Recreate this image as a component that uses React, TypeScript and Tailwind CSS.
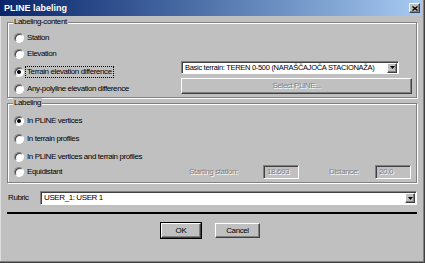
import React from "react";

const raised =
  "border border-t-white border-l-white border-r-[#404040] border-b-[#404040] shadow-[inset_-1px_-1px_0_#808080]";
const sunken =
  "border border-t-[#808080] border-l-[#808080] border-r-white border-b-white shadow-[inset_1px_1px_0_#404040]";
const etched =
  "border border-[#808080] shadow-[inset_1px_1px_0_white,1px_1px_0_white]";
const disabledText = "text-[#808080] [text-shadow:1px_1px_0_#ffffff]";

function Radio({ checked = false }: { checked?: boolean }) {
  return (
    <span className="w-[10px] h-[10px] shrink-0 rounded-full border border-t-[#808080] border-l-[#808080] border-r-white border-b-white bg-white shadow-[inset_1px_1px_0_#404040] flex items-center justify-center">
      {checked && <span className="w-[4px] h-[4px] rounded-full bg-black" />}
    </span>
  );
}

function RadioRow({
  label,
  checked,
  focus,
  className = "",
}: {
  label: string;
  checked?: boolean;
  focus?: boolean;
  className?: string;
}) {
  return (
    <div className={"flex items-center h-[12px] gap-[2px] " + className}>
      <Radio checked={checked} />
      <span
        className={
          "whitespace-nowrap leading-[10px] px-[1px] " +
          (focus ? "outline outline-1 outline-dotted outline-black" : "")
        }
      >
        {label}
      </span>
    </div>
  );
}

function Arrow() {
  return (
    <span className={"w-[10px] h-[10px] bg-[#c0c0c0] flex items-center justify-center " + raised}>
      <svg width="5" height="3" viewBox="0 0 5 3">
        <path d="M0 0H5L2.5 3Z" fill="#000" />
      </svg>
    </span>
  );
}

export default function App() {
  return (
    <div className="w-[425px] h-[263px] bg-[#c0c0c0] overflow-hidden flex flex-col font-['Liberation_Sans',Arial,sans-serif] text-[8px] tracking-[-0.4px] text-black shadow-[inset_-1px_-1px_0_#404040,inset_-2px_-2px_0_#808080,inset_1px_0_0_#dfdfdf]">
      {/* Title bar */}
      <div className="h-[16px] w-[421px] shrink-0 flex items-center justify-between pl-[4px] pr-[1px] bg-gradient-to-r from-[#0a246a] to-[#a6caf0]">
        <span className="text-white font-bold text-[9px] tracking-normal leading-none">PLINE labeling</span>
        <span className={"w-[11px] h-[10px] bg-[#c0c0c0] flex items-center justify-center " + raised}>
          <svg width="6" height="5" viewBox="0 0 6 5">
            <path d="M0.5 0.5L5.5 4.5M5.5 0.5L0.5 4.5" stroke="#000" strokeWidth="1.4" />
          </svg>
        </span>
      </div>

      <div className="flex flex-col pl-[7px]">
        {/* Group 1 */}
        <div className={"relative mt-[6px] w-[410px] h-[76px] flex " + etched}>
          <span className="absolute -top-[6px] left-[5px] px-[1px] bg-[#c0c0c0] leading-[10px]">
            Labeling-content
          </span>
          <div className="w-[173px] flex flex-col pl-[6px]">
            <RadioRow label="Station" className="mt-[9px]" />
            <RadioRow label="Elevation" className="mt-[4px]" />
            <RadioRow label="Terrain elevation difference" checked focus className="mt-[6px]" />
            <RadioRow label="Any-polyline elevation difference" className="mt-[5px]" />
          </div>
          <div className="flex flex-col pt-[38px]">
            <div className={"w-[218px] h-[13px] bg-white flex items-center justify-between pl-[3px] pr-[1px] " + sunken}>
              <span className="whitespace-nowrap leading-none text-[7.5px] tracking-[-0.3px]">
                Basic terrain: TEREN 0-500 (NARAŠČAJOČA STACIONAŽA)
              </span>
              <Arrow />
            </div>
            <div className={"mt-[4px] w-[231px] h-[16px] flex items-center justify-center " + raised}>
              <span className={disabledText}>Select PLINE...</span>
            </div>
          </div>
        </div>

        {/* Group 2 */}
        <div className={"relative mt-[5px] w-[410px] h-[80px] flex flex-col pl-[6px] " + etched}>
          <span className="absolute -top-[6px] left-[5px] px-[1px] bg-[#c0c0c0] leading-[10px]">Labeling</span>
          <RadioRow label="In PLINE vertices" checked className="mt-[11px]" />
          <RadioRow label="In terrain profiles" className="mt-[6px]" />
          <RadioRow label="In PLINE vertices and terrain profiles" className="mt-[6px]" />
          <div className="mt-[2px] h-[14px] flex items-center">
            <div className="w-[175px]">
              <RadioRow label="Equidistant" />
            </div>
            <span className={"w-[74px] whitespace-nowrap " + disabledText}>Starting station:</span>
            <div className={"w-[36px] h-[14px] flex items-center pl-[3px] " + sunken}>
              <span className={disabledText}>18.693</span>
            </div>
            <span className={"ml-[30px] w-[46px] whitespace-nowrap " + disabledText}>Distance:</span>
            <div className={"w-[36px] h-[14px] flex items-center pl-[3px] " + sunken}>
              <span className={disabledText}>20.0</span>
            </div>
          </div>
        </div>

        {/* Rubric */}
        <div className="mt-[8px] h-[14px] flex items-center">
          <span className="w-[33px] pl-[1px]">Rubric</span>
          <div className={"w-[377px] h-[14px] bg-white flex items-center justify-between pl-[3px] pr-[1px] " + sunken}>
            <span className="leading-none">USER_1: USER 1</span>
            <Arrow />
          </div>
        </div>

        <div className="mt-[7px] w-[410px] h-[2px] bg-black" />

        {/* Buttons */}
        <div className="mt-[9px] w-[410px] flex justify-center gap-[14px] pr-[3px]">
          <div className={"w-[40px] h-[15px] flex items-center justify-center outline outline-1 outline-black " + raised}>
            OK
          </div>
          <div className={"w-[45px] h-[15px] flex items-center justify-center " + raised}>Cancel</div>
        </div>
      </div>
    </div>
  );
}
